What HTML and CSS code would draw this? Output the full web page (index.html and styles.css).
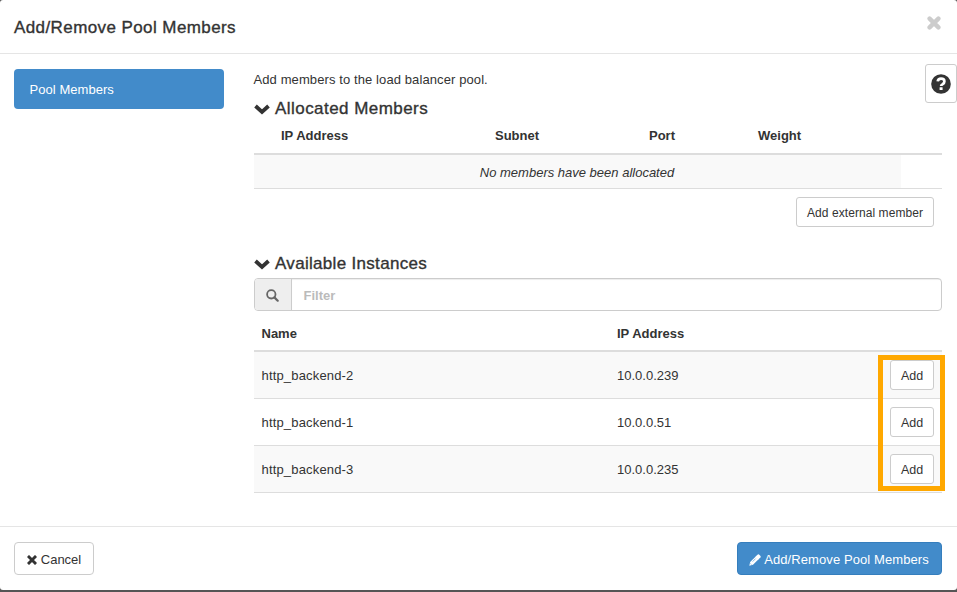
FILE: index.html
```html
<!DOCTYPE html>
<html lang="en">
<head>
<meta charset="utf-8">
<title>Add/Remove Pool Members</title>
<link rel="stylesheet" href="styles.css">
</head>
<body>
<div class="modal">
  <header class="modal-header">
    <h1 class="title">Add/Remove Pool Members</h1>
    <button class="close" aria-label="Close"><svg width="14" height="14" viewBox="0 0 14 14"><path d="M2.6 2.6 11.4 11.4M11.4 2.6 2.6 11.4" stroke="currentColor" stroke-width="4.4" stroke-linecap="round"/></svg></button>
  </header>
  <div class="modal-body">
    <nav class="steps"><a class="step">Pool Members</a></nav>
    <main class="content">
      <p class="intro">Add members to the load balancer pool.</p>
      <section class="allocated">
        <h2 class="section-title"><svg class="chevron" width="16" height="11" viewBox="0 0 16 11"><path d="M1.5 2 8 8 14.5 2" fill="none" stroke="currentColor" stroke-width="3.8"/></svg><span>Allocated Members</span></h2>
        <div class="row head alloc-grid"><span></span><b>IP Address</b><b>Subnet</b><b>Port</b><b>Weight</b></div>
        <div class="empty"><div class="empty-cell"><em>No members have been allocated</em></div></div>
        <div class="external"><button class="btn btn-sm btn-external">Add external member</button></div>
      </section>
      <section class="available">
        <h2 class="section-title section-title-tight"><svg class="chevron" width="16" height="11" viewBox="0 0 16 11"><path d="M1.5 2 8 8 14.5 2" fill="none" stroke="currentColor" stroke-width="3.8"/></svg><span>Available Instances</span></h2>
        <div class="filter">
          <span class="addon"><svg width="13" height="13" viewBox="0 0 13 13"><circle cx="5.3" cy="5.3" r="4.2" fill="none" stroke="currentColor" stroke-width="1.8"/><path d="M8.4 8.4 11.7 11.7" stroke="currentColor" stroke-width="2.2" stroke-linecap="round"/></svg></span>
          <span class="field">Filter</span>
        </div>
        <div class="row head inst-grid"><b>Name</b><b>IP Address</b></div>
        <div class="instances">
          <div class="row inst inst-grid"><span class="name">http_backend-2</span><span>10.0.0.239</span><button class="btn btn-sm">Add</button></div>
          <div class="row inst inst-grid"><span class="name">http_backend-1</span><span>10.0.0.51</span><button class="btn btn-sm">Add</button></div>
          <div class="row inst inst-grid"><span class="name">http_backend-3</span><span>10.0.0.235</span><button class="btn btn-sm">Add</button></div>
          <div class="highlight"></div>
        </div>
      </section>
    </main>
    <button class="help" aria-label="Help"><svg width="20" height="20" viewBox="0 0 20 20"><circle cx="10" cy="10" r="9.8" fill="currentColor"/><path d="M6.7 7.4C7 5.4 8.3 4.7 10 4.7c2 0 3.4 1.1 3.4 2.8 0 1.3-.8 2-1.7 2.6-1.1.6-1.6 1-1.6 2" fill="none" stroke="#fff" stroke-width="2.7"/><rect x="8.6" y="13.2" width="3" height="2.9" rx=".3" fill="#fff"/></svg></button>
  </div>
  <footer class="modal-footer">
    <button class="btn btn-lg cancel"><svg width="10" height="10" viewBox="0 0 10 10"><path d="M2 2 8 8M8 2 2 8" stroke="currentColor" stroke-width="2.9" stroke-linecap="square"/></svg>Cancel</button>
    <button class="btn btn-lg primary"><svg width="12" height="12" viewBox="0 0 12 12"><path d="M0.3 11.7 1.2 8 7 2.2 9.8 5 4 10.8Z" fill="currentColor"/><path d="M6.6 2.6 8.8.5Q9.4 0 10 .5L11.5 2Q12 2.6 11.5 3.2L9.4 5.4Z" fill="currentColor"/><path d="M3.6 7.6 6.6 4.6M1.4 9.5 2.5 10.6" stroke="#428bca" stroke-width=".6"/></svg>Add/Remove Pool Members</button>
  </footer>
</div>
</body>
</html>
```
FILE: styles.css
```css
* { box-sizing: border-box; }

body {
  margin: 0;
  height: 592px;
  overflow: hidden;
  background: #555;
  color: #333;
  font: 13px/18px "Liberation Sans", Arial, sans-serif;
}

button { font: inherit; color: inherit; }
h1, h2, p { margin: 0; }

.modal {
  height: 590px;
  display: flex;
  flex-direction: column;
  background: #fff;
  border-radius: 3px;
}

.modal-header {
  height: 54px;
  display: flex;
  justify-content: space-between;
  padding: 16px 16px 0 14px;
  border-bottom: 1px solid #e5e5e5;
}

.title, .section-title {
  font-size: 17px;
  line-height: 22px;
  font-weight: 400;
  letter-spacing: 0.41px;
  -webkit-text-stroke: 0.35px #333;
  white-space: nowrap;
}

.title { padding-top: 1px; }
.section-title { letter-spacing: 0.45px; }
.section-title-tight { letter-spacing: 0.31px; }

.close {
  align-self: flex-start;
  width: 14px;
  height: 14px;
  padding: 0;
  border: 0;
  background: none;
  color: #ccc;
}

svg { display: block; flex: none; }

.modal-body {
  height: 472px;
  display: flex;
  padding-left: 14px;
}

.steps { flex: none; width: 240px; padding-top: 15px; }

.step {
  width: 210px;
  height: 40px;
  display: flex;
  align-items: center;
  padding: 1px 0 0 15.5px;
  border-radius: 4px;
  background: #428bca;
  color: #fff;
  letter-spacing: 0.05px;
}

.content { flex: none; width: 688px; padding-top: 17px; }
.intro { height: 27px; margin-left: -0.5px; white-space: nowrap; letter-spacing: 0.1px; }

.section-title { display: flex; align-items: center; height: 22px; gap: 5px; }
.chevron { margin-top: 1px; }

.row { display: grid; align-items: center; white-space: nowrap; }
.head { border-bottom: 2px solid #ddd; }
.alloc-grid { grid-template-columns: 27px 214px 154px 109px 1fr; height: 35px; padding-bottom: 2px; }
.inst-grid { grid-template-columns: 355.5px 273px 44px; padding-left: 7.5px; }

.empty { height: 34px; border-bottom: 1px solid #ddd; }

.empty-cell {
  width: 647px;
  height: 33px;
  padding: 1px 1px 0 0;
  line-height: 34px;
  background: #f9f9f9;
  text-align: center;
}

.external { display: flex; justify-content: flex-end; padding: 8px 8px 0 0; }

.btn {
  display: flex;
  align-items: center;
  justify-content: center;
  padding: 1px 0 0;
  border: 1px solid #ccc;
  border-radius: 3px;
  background: #fff;
  white-space: nowrap;
}

.btn-sm { width: 44px; height: 30px; font-size: 12.5px; padding-top: 2px; }
.btn-external { width: 138px; font-size: 12px; letter-spacing: 0.07px; }

.available { padding-top: 26px; }

.filter {
  height: 33px;
  display: flex;
  margin-top: 3px;
  border: 1px solid #ccc;
  border-radius: 4px;
  overflow: hidden;
}

.addon {
  width: 37px;
  display: grid;
  place-items: center;
  padding: 2px 1px 0 0;
  background: #eee;
  border-right: 1px solid #ccc;
  color: #666;
}

.field {
  flex: 1;
  padding: 8px 12px 0 11.5px;
  box-shadow: inset 0 1px 1px rgba(0, 0, 0, 0.075);
  color: #bbb;
  font-weight: 700;
  line-height: 18px;
}

.available .head { height: 41px; padding-top: 7px; }
.instances { position: relative; }
.inst { height: 47px; border-bottom: 1px solid #ddd; }
.inst > span { padding-top: 1px; }
.inst .name { letter-spacing: 0.17px; }
.inst:nth-child(odd) { background: #f9f9f9; }
.inst .btn { margin-top: -1px; }

.highlight {
  position: absolute;
  left: 624px;
  top: 3px;
  width: 67px;
  height: 136px;
  border: 5px solid #ffa800;
}

.help {
  flex: none;
  width: 32px;
  height: 39px;
  display: grid;
  place-items: center;
  margin: 10px 0 0 -17px;
  padding: 0;
  border: 1px solid #ccc;
  border-radius: 3px;
  background: #fff;
}

.modal-footer {
  height: 64px;
  display: flex;
  justify-content: space-between;
  padding: 15px 15px 0 14px;
  border-top: 1px solid #e5e5e5;
}

.btn-lg { height: 33px; border-radius: 4px; gap: 4px; padding-top: 3px; }
.cancel { width: 80px; }
.primary {
  width: 205px;
  gap: 3px;
  padding-right: 1px;
  background: #428bca;
  border-color: #357ebd;
  color: #fff;
  letter-spacing: 0.09px;
}
```
